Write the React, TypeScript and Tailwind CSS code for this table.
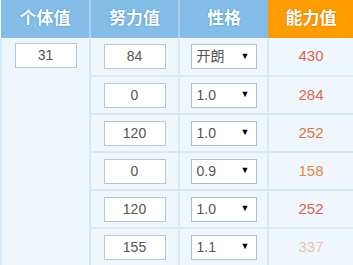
const rows = [
  { ev: "84", nature: "开朗", stat: "430", color: "text-[#e0644a]" },
  { ev: "0", nature: "1.0", stat: "284", color: "text-[#e06a48]" },
  { ev: "120", nature: "1.0", stat: "252", color: "text-[#e0704a]" },
  { ev: "0", nature: "0.9", stat: "158", color: "text-[#e38a3c]" },
  { ev: "120", nature: "1.0", stat: "252", color: "text-[#e0604a]" },
  { ev: "155", nature: "1.1", stat: "337", color: "text-[#f0c0ae]" },
]

function Box({ value }: { value: string }) {
  return (
    <div className="mx-auto flex h-[25px] w-[62px] items-center justify-center border border-[#b9c6cf] bg-white text-[14px] text-[#555]">
      {value}
    </div>
  )
}

function Select({ value }: { value: string }) {
  return (
    <div className="mx-auto flex h-[25px] w-[66px] items-center justify-between border border-[#a9bfcc] bg-white pl-[5px] pr-[6px] text-[14px] text-[#555]">
      <span>{value}</span>
      <span className="text-[9px] text-black">▼</span>
    </div>
  )
}

export default function App() {
  const head = "h-[38px] text-[17px] font-bold text-white [text-shadow:0_0_2px_#4a93cf,0_0_1px_#4a93cf]"
  return (
    <div
      className="h-[265px] w-[353px] overflow-hidden bg-white"
      style={{ fontFamily: '"Liberation Sans", "Noto Sans CJK SC", sans-serif' }}
    >
      <table className="w-[353px] table-fixed border-collapse">
        <colgroup>
          <col className="w-[89px]" />
          <col className="w-[89px]" />
          <col className="w-[89px]" />
          <col className="w-[86px]" />
        </colgroup>
        <thead>
          <tr>
            <th className={`${head} border-r-2 border-[#a9d2ef] bg-[#84bee8]`}>个体值</th>
            <th className={`${head} border-r-2 border-[#a9d2ef] bg-[#84bee8]`}>努力值</th>
            <th className={`${head} bg-[#84bee8]`}>性格</th>
            <th className="h-[38px] bg-[#ff9d00] text-[17px] font-bold text-white [text-shadow:0_0_2px_#c86a00]">
              能力值
            </th>
          </tr>
        </thead>
        <tbody className="bg-[#eff7fd]">
          {rows.map((r, i) => (
            <tr key={i} className="h-[38px]">
              {i === 0 && (
                <td rowSpan={6} className="border-r-2 border-b-2 border-l-2 border-[#d6e9f7] align-top pt-[5px]">
                  <Box value="31" />
                </td>
              )}
              <td className="border-r-2 border-b-2 border-[#d6e9f7]">
                <Box value={r.ev} />
              </td>
              <td className="border-r-2 border-b-2 border-[#d6e9f7]">
                <Select value={r.nature} />
              </td>
              <td className={`border-r-2 border-b-2 border-[#d6e9f7] text-center text-[15px] ${r.color}`}>
                {r.stat}
              </td>
            </tr>
          ))}
        </tbody>
      </table>
    </div>
  )
}
